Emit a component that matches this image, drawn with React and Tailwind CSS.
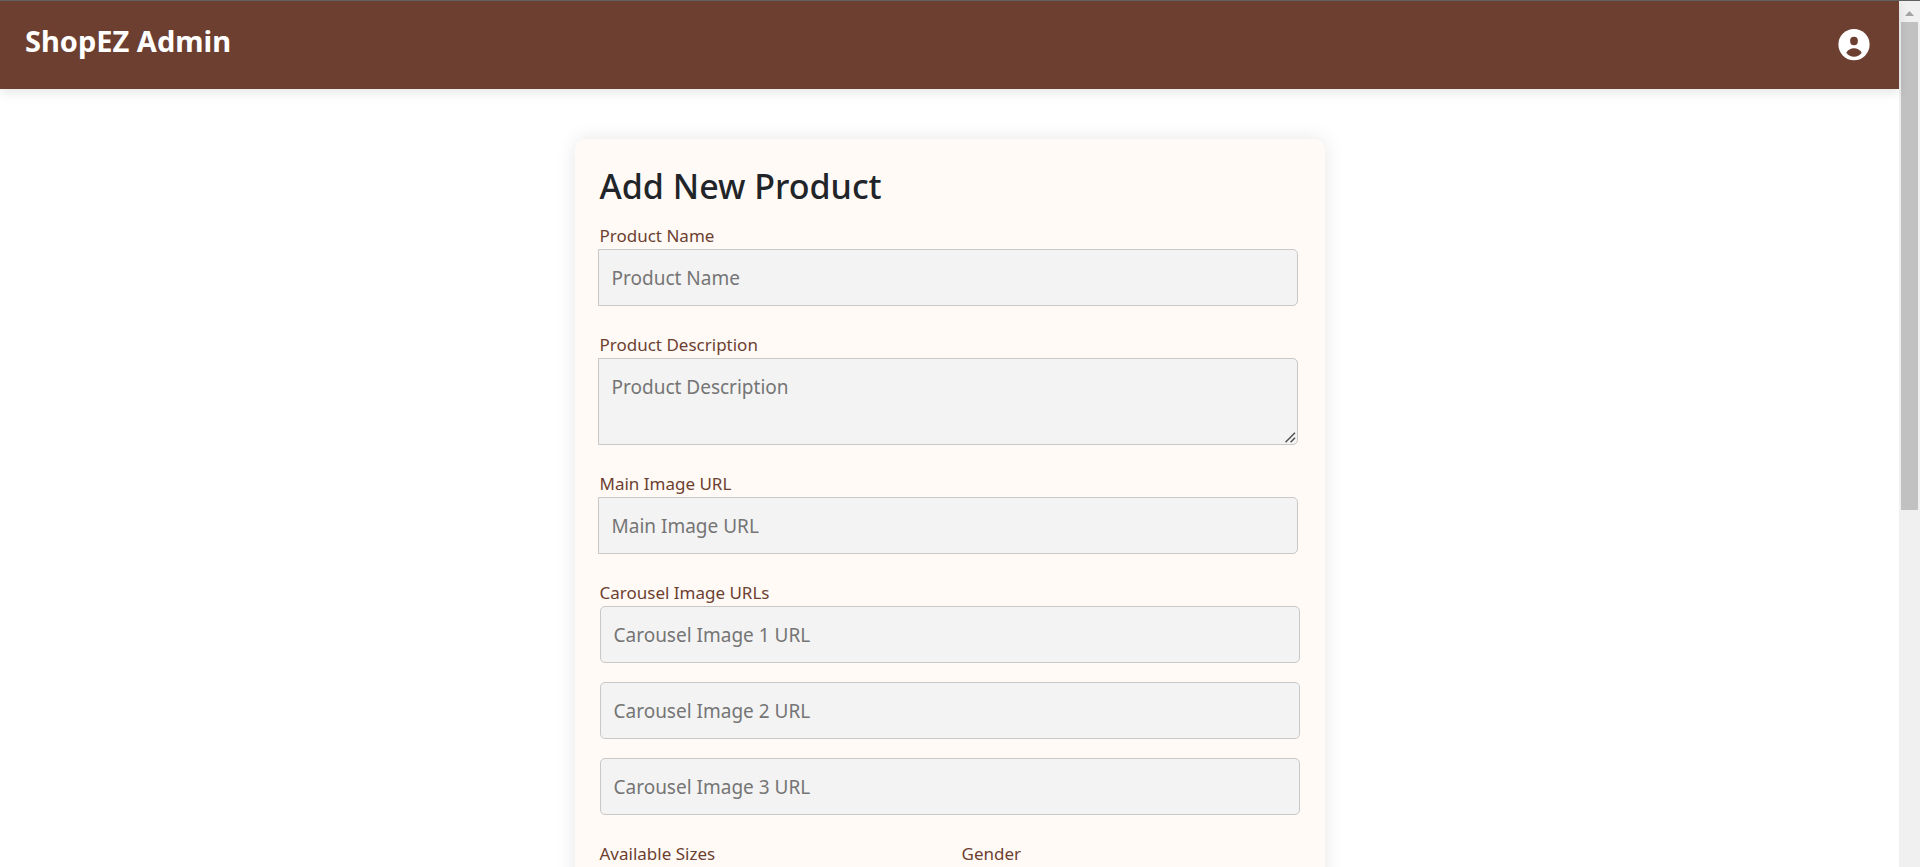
const fieldBase =
  "block w-full border border-[#c8c8c8] bg-[#f3f3f3] px-[13px] text-[19px] text-[#212529] placeholder:text-[#757575] focus:outline-none";
const labelBase = "block text-[17px] leading-[27px] text-[#6d3f30]";

function AccountIcon() {
  return (
    <svg width="32" height="32" viewBox="0 0 32 32" aria-hidden="true">
      <circle cx="16" cy="15.6" r="15.6" fill="#ffffff" />
      <ellipse cx="16" cy="12" rx="3.9" ry="4.2" fill="#6d3f30" />
      <path
        d="M8.3 23.8C9.8 20.8 12.8 19.3 16 19.3S22.2 20.8 23.7 23.8C21.8 26.5 19 27.7 16 27.7S10.2 26.5 8.3 23.8Z"
        fill="#6d3f30"
      />
    </svg>
  );
}

function ResizeGrip() {
  return (
    <svg
      width="11"
      height="11"
      viewBox="0 0 11 11"
      stroke="#505050"
      strokeWidth="1.5"
      aria-hidden="true"
      className="pointer-events-none absolute right-0.5 bottom-0.5"
    >
      <path d="M0.5 10.2 10 0.7M5.6 10.2 10 5.8" />
    </svg>
  );
}

function Field({ id, label, multiline }) {
  return (
    <div>
      <label htmlFor={id} className={labelBase}>
        {label}
      </label>
      <div className="relative -ml-0.5 mr-0.5">
        {multiline ? (
          <>
            <textarea
              id={id}
              placeholder={label}
              className={`${fieldBase} h-[87px] resize-y rounded-r-[5px] py-3.5 leading-[29px] [&::-webkit-resizer]:bg-transparent`}
            />
            <ResizeGrip />
          </>
        ) : (
          <input
            id={id}
            type="text"
            placeholder={label}
            className={`${fieldBase} h-[57px] rounded-r-[5px]`}
          />
        )}
      </div>
    </div>
  );
}

function CarouselFields() {
  return (
    <fieldset>
      <legend className={labelBase}>Carousel Image URLs</legend>
      <div className="flex flex-col gap-[19px]">
        {[1, 2, 3].map((n) => (
          <input
            key={n}
            type="text"
            aria-label={`Carousel Image ${n} URL`}
            placeholder={`Carousel Image ${n} URL`}
            className={`${fieldBase} h-[57px] rounded-[5px]`}
          />
        ))}
      </div>
    </fieldset>
  );
}

function Header() {
  return (
    <header className="relative flex h-[89px] shrink-0 items-center justify-between border-t border-[#606060] bg-[#6d3f30] pr-[29px] pl-[25px] shadow-[0_4px_10px_rgba(0,0,0,0.1)]">
      <a
        href="#"
        className="pb-2 text-[29px] leading-[34px] font-bold text-white"
      >
        ShopEZ Admin
      </a>
      <button type="button" aria-label="Account">
        <AccountIcon />
      </button>
    </header>
  );
}

function ScrollTrack() {
  return (
    <div
      aria-hidden="true"
      className="flex w-[21px] shrink-0 flex-col items-center border-t border-[#606060] bg-[#f0f0f0]"
    >
      <div className="flex h-[21px] shrink-0 items-center pt-1">
        <svg width="9" height="5" viewBox="0 0 9 5" fill="#a3a3a3">
          <path d="M4.5 0 9 5H0z" />
        </svg>
      </div>
      <div className="h-[56.4%] w-[17px] bg-[#c1c1c1]" />
    </div>
  );
}

export default function App() {
  return (
    <div className="flex h-screen overflow-hidden bg-white font-['Noto_Sans','Open_Sans',sans-serif]">
      <div className="flex min-w-0 grow flex-col">
        <Header />
        <main className="grow overflow-y-auto px-6 pt-[50px] pb-12 [scrollbar-width:none]">
          <form className="mx-auto max-w-[750px] rounded-[10px] bg-[#fffaf6] px-[25px] pt-[25px] pb-12 shadow-[0_0_20px_rgba(0,0,0,0.1)]">
            <h1 className="mb-3.5 text-[34px] leading-[44px] font-medium text-[#212529]">
              Add New Product
            </h1>
            <div className="flex flex-col gap-[25px]">
              <Field id="name" label="Product Name" />
              <Field id="description" label="Product Description" multiline />
              <Field id="main-image" label="Main Image URL" />
              <CarouselFields />
              <div className="grid grid-cols-2 gap-6">
                <p className={labelBase}>Available Sizes</p>
                <p className={labelBase}>Gender</p>
              </div>
            </div>
          </form>
        </main>
      </div>
      <ScrollTrack />
    </div>
  );
}
